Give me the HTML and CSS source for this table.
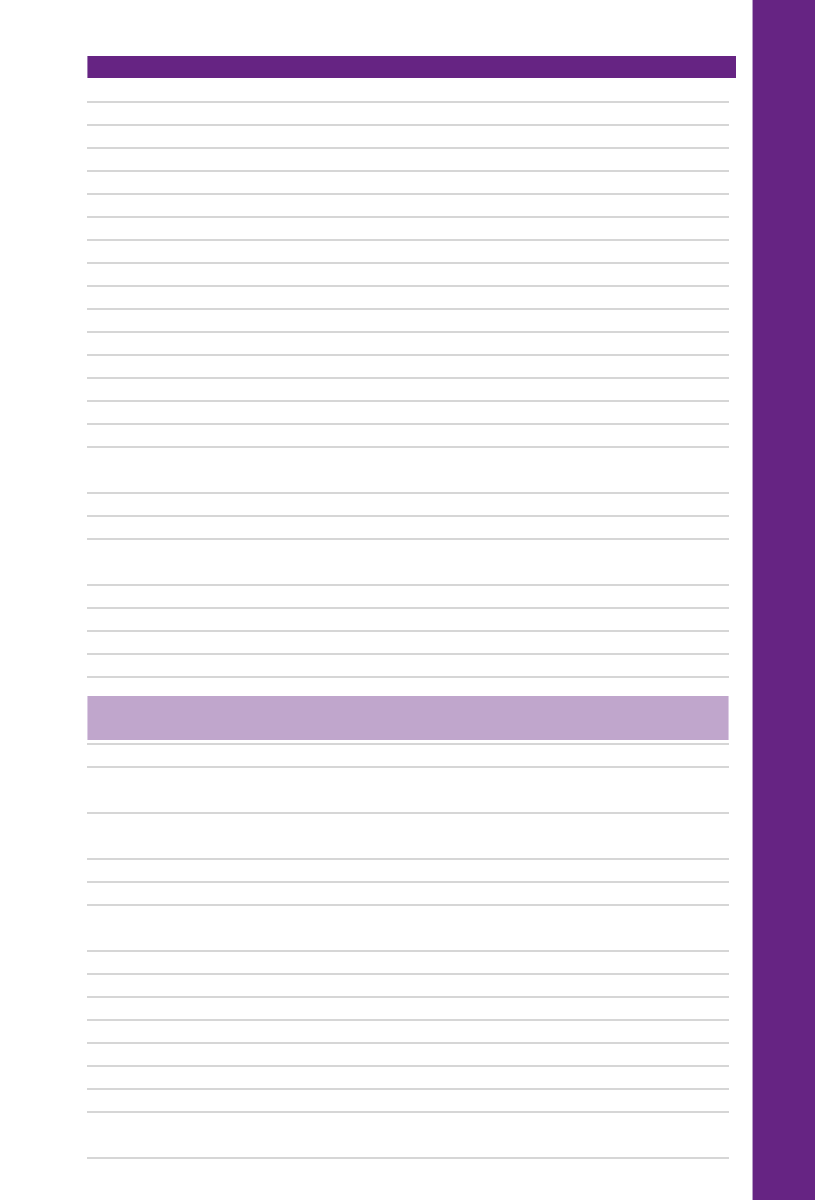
FILE: index.html
```html
<!DOCTYPE html>
<html>
<head>
<meta charset="utf-8">
<link rel="stylesheet" href="styles.css">
</head>
<body>
<div class="page">
  <main class="sheet">
    <div class="head-bar"></div>
    <div class="rows">
      <div class="row"></div><div class="row"></div><div class="row"></div><div class="row"></div>
      <div class="row"></div><div class="row"></div><div class="row"></div><div class="row"></div>
      <div class="row"></div><div class="row"></div><div class="row"></div><div class="row"></div>
      <div class="row"></div><div class="row"></div><div class="row"></div><div class="row"></div>
      <div class="row tall"></div>
      <div class="row"></div><div class="row"></div>
      <div class="row tall"></div>
      <div class="row"></div><div class="row"></div><div class="row"></div><div class="row"></div>
    </div>
    <div class="band"></div>
    <div class="rows">
      <div class="rule"></div>
      <div class="row"></div>
      <div class="row tall"></div>
      <div class="row tall"></div>
      <div class="row"></div><div class="row"></div>
      <div class="row tall"></div>
      <div class="row"></div><div class="row"></div><div class="row"></div><div class="row"></div>
      <div class="row"></div><div class="row"></div><div class="row"></div>
      <div class="row tall"></div>
    </div>
  </main>
  <aside class="side"></aside>
</div>
</body>
</html>
```
FILE: styles.css
```css
html, body {
  margin: 0;
  padding: 0;
  background: #ffffff;
  font-family: "Liberation Sans", Arial, sans-serif;
}

.page {
  display: flex;
  width: 815px;
  height: 1200px;
  overflow: hidden;
}

.sheet {
  flex: 0 0 752px;
  box-sizing: border-box;
  padding: 56px 0 0 87px;
}

.head-bar {
  width: 649px;
  height: 22px;
  background: #662483;
  box-shadow: inset 1px 0 0 #a37fb6;
  margin-bottom: 2px;
}

.rows {
  width: 642px;
}

.row {
  height: 21px;
  border-bottom: 2px solid #d6d6d6;
}

.row.tall {
  height: 44px;
}

.band {
  width: 642px;
  height: 44px;
  margin-top: 18px;
  margin-bottom: 3px;
  background: #c0a6cc;
  box-shadow: inset 1px 0 0 #dccde4, inset -1px 0 0 #dccde4;
}

.rule {
  border-top: 2px solid #d6d6d6;
}

.side {
  flex: 0 0 63px;
  height: 1200px;
  background: #662483;
  box-shadow: inset 1px 0 0 #b89cc8;
}
```
